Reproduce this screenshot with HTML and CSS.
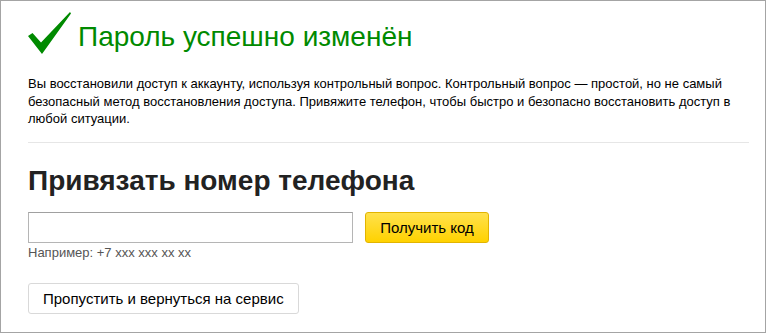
FILE: index.html
```html
<!DOCTYPE html>
<html lang="ru">

<head>
  <meta charset="UTF-8">
  <meta name="viewport" content="width=device-width, initial-scale=1.0">
  <title>Пароль успешно изменён</title>
  <link rel="stylesheet" href="styles.css">
</head>

<body>
  <div id="frame">
    <div class="success">
      <svg class="success-icon" width="44" height="44" viewBox="0 0 44 44">
        <polygon points="0,24 4.5,21 13,30.5 42,0 43,1.5 14,42" fill="#008a00"/>
      </svg>
      <h1 class="success-title">Пароль успешно изменён</h1>
    </div>
    <p class="note">Вы восстановили доступ к аккаунту, используя контрольный вопрос. Контрольный вопрос — простой, но не самый безопасный метод восстановления доступа. Привяжите телефон, чтобы быстро и безопасно восстановить доступ в любой ситуации.</p>
    <hr class="divider">
    <h2 class="phone-title">Привязать номер телефона</h2>
    <div class="phone-row">
      <input class="phone-input" type="text">
      <button class="btn btn-yellow">Получить код</button>
    </div>
    <div class="hint">Например: +7 xxx xxx xx xx</div>
    <button class="btn btn-skip">Пропустить и вернуться на сервис</button>
  </div>
</body>

</html>
```

FILE: styles.css
```css
* {
  margin: 0;
  padding: 0;
  box-sizing: border-box;
}

body {
  font-family: "Liberation Sans", Arial, sans-serif;
  background: #fff;
  color: #000;
}

#frame {
  width: 766px;
  height: 333px;
  border: 1px solid #a4a4a4;
  padding: 0 16px 0 27px;
  overflow: hidden;
}

.success {
  display: flex;
  align-items: flex-start;
  padding-top: 11px;
}

.success-icon {
  flex: none;
  margin-right: 6px;
}

.success-title {
  margin-top: 9px;
  font-size: 28px;
  line-height: 32px;
  font-weight: normal;
  color: #008a00;
}

.note {
  margin-top: 19px;
  font-size: 13px;
  line-height: 17.5px;
}

.divider {
  border: 0;
  border-top: 1px solid #e6e6e6;
  margin-top: 14px;
}

.phone-title {
  margin-top: 22px;
  font-size: 28px;
  line-height: 32px;
  font-weight: bold;
  color: #222;
}

.phone-row {
  display: flex;
  gap: 12px;
  margin-top: 15px;
}

.phone-input {
  width: 325px;
  height: 31px;
  border: 1px solid #b5b5b5;
  border-top-color: #a0a0a0;
  font: 15px "Liberation Sans", Arial, sans-serif;
  padding: 0 8px;
}

.btn {
  font: 15px "Liberation Sans", Arial, sans-serif;
  color: #000;
  border-radius: 3px;
  height: 31px;
  cursor: pointer;
}

.btn-yellow {
  width: 124px;
  border: 1px solid #e2b400;
  background: linear-gradient(#ffe14d, #ffd200);
}

.hint {
  margin-top: 2px;
  font-size: 13px;
  line-height: 16px;
  color: #555;
}

.btn-skip {
  margin-top: 22px;
  padding: 0 14px;
  background: #fff;
  border: 1px solid #d9d9d9;
}
```
